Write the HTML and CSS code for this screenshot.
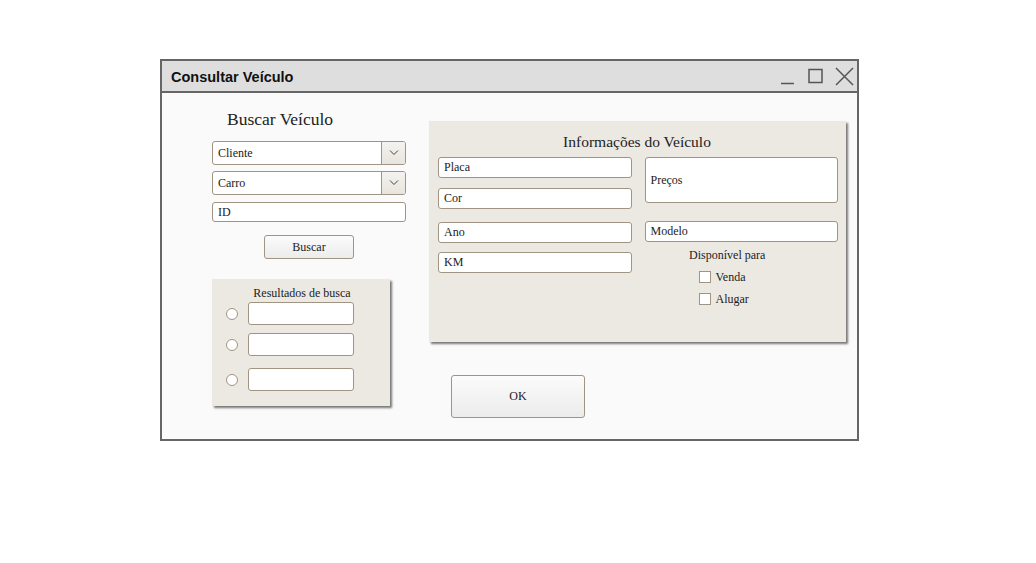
FILE: index.html
```html
<!DOCTYPE html>
<html lang="pt">
<head>
<meta charset="utf-8">
<title>Consultar Veículo</title>
<link rel="stylesheet" href="styles.css">
</head>
<body>
<div class="window">
  <div class="titlebar">
    <span class="title">Consultar Veículo</span>
    <div class="controls">
      <svg class="ctl" width="16" height="18" viewBox="0 0 16 18"><line x1="0" y1="16.5" x2="13" y2="16.5" stroke="#555" stroke-width="1.5"/></svg>
      <svg class="ctl" width="16" height="18" viewBox="0 0 16 18"><rect x="1" y="2.5" width="13" height="13" fill="none" stroke="#555" stroke-width="1.5"/></svg>
      <svg class="ctl" width="19" height="19" viewBox="0 0 19 19"><path d="M1 1 L18 18 M18 1 L1 18" stroke="#555" stroke-width="1.5" fill="none"/></svg>
    </div>
  </div>
  <div class="content">
    <div class="leftcol">
      <div class="heading">Buscar Veículo</div>
      <div class="select s1"><span class="val">Cliente</span><span class="dd"><svg width="10" height="6" viewBox="0 0 10 6"><path d="M1 0.5 L5 4.5 L9 0.5" fill="none" stroke="#444" stroke-width="1"/></svg></span></div>
      <div class="select s2"><span class="val">Carro</span><span class="dd"><svg width="10" height="6" viewBox="0 0 10 6"><path d="M1 0.5 L5 4.5 L9 0.5" fill="none" stroke="#444" stroke-width="1"/></svg></span></div>
      <div class="input idbox">ID</div>
      <div class="btn buscar">Buscar</div>
      <div class="panel results">
        <div class="ptitle">Resultados de busca</div>
        <div class="rrow r1"><span class="radio"></span><span class="input rinput"></span></div>
        <div class="rrow r2"><span class="radio"></span><span class="input rinput"></span></div>
        <div class="rrow r3"><span class="radio"></span><span class="input rinput"></span></div>
      </div>
    </div>
    <div class="rightcol">
      <div class="panel info">
        <div class="ititle">Informações do Veículo</div>
        <div class="icols">
          <div class="icol">
            <div class="input f placa">Placa</div>
            <div class="input f cor">Cor</div>
            <div class="input f ano">Ano</div>
            <div class="input f km">KM</div>
          </div>
          <div class="icol">
            <div class="input precos">Preços</div>
            <div class="input f modelo">Modelo</div>
            <div class="disp">Disponível para</div>
            <div class="chk c1"><span class="box"></span>Venda</div>
            <div class="chk c2"><span class="box"></span>Alugar</div>
          </div>
        </div>
      </div>
      <div class="btn ok">OK</div>
    </div>
  </div>
</div>
</body>
</html>
```
FILE: styles.css
```css
* { box-sizing: border-box; }
body { margin: 0; background: #fff; font-family: "Liberation Serif", "Times New Roman", serif; color: #222; }
.window {
  margin: 59px 0 0 160px;
  width: 699px;
  height: 382px;
  border: 2px solid #666;
  background: #fafafa;
}
.titlebar {
  height: 32px;
  background: #dedede;
  border-bottom: 2px solid #666;
  display: flex;
  align-items: center;
  justify-content: space-between;
  padding: 0 3px 0 9px;
}
.title {
  font-family: "Liberation Sans", Arial, sans-serif;
  font-weight: bold;
  font-size: 14.5px;
  color: #111;
  margin-top: 1px;
}
.controls { display: flex; align-items: center; gap: 11px; height: 100%; }
.ctl { display: block; }
.content { display: flex; padding-left: 50px; }
.leftcol { width: 194px; display: flex; flex-direction: column; }
.heading {
  margin-top: 16px;
  height: 20px;
  line-height: 20px;
  font-size: 17.5px;
  padding-left: 15px;
  color: #222;
}
.input {
  background: #fff;
  border: 1px solid #a09585;
  border-radius: 3px;
  font-size: 12px;
  padding-left: 5px;
  display: flex;
  align-items: center;
  color: #222;
}
.select {
  height: 24px;
  background: #fff;
  border: 1px solid #a09585;
  border-radius: 3px;
  display: flex;
  font-size: 12px;
}
.select .val { flex: 1; display: flex; align-items: center; padding-left: 5px; }
.select .dd {
  width: 24px;
  border-left: 1px solid #a09585;
  background: linear-gradient(#f4f2ee, #e8e5df);
  display: flex; align-items: center; justify-content: center;
  border-radius: 0 2px 2px 0;
}
.s1 { margin-top: 12px; }
.s2 { margin-top: 6px; }
.idbox { margin-top: 7px; height: 20px; }
.btn {
  border: 1px solid #a09585;
  border-radius: 3px;
  background: linear-gradient(#fbfbfb, #ececec);
  display: flex; align-items: center; justify-content: center;
  font-size: 12px;
  color: #222;
}
.buscar { margin: 13px 0 0 52px; width: 90px; height: 24px; }
.panel {
  background: #ece9e3;
  box-shadow: 2px 2px 2px #777;
}
.results {
  margin-top: 20px;
  width: 178px;
  height: 127px;
  padding-top: 7px;
}
.ptitle { text-align: center; font-size: 12px; height: 14px; line-height: 14px; padding-left: 2px; }
.rrow { display: flex; align-items: center; padding-left: 14px; }
.r1 { margin-top: 2px; }
.r2 { margin-top: 8px; }
.r3 { margin-top: 12px; }
.radio {
  width: 12px; height: 12px;
  border: 1px solid #a09585;
  border-radius: 50%;
  background: #fff;
}
.rinput { margin-left: 10px; width: 106px; height: 23px; }
.rightcol { margin-left: 23px; display: flex; flex-direction: column; }
.info {
  margin-top: 28px;
  width: 417px;
  height: 221px;
  padding: 11px 8px 0 9px;
}
.ititle { text-align: center; font-size: 15.5px; height: 20px; line-height: 20px; padding-right: 2px; }
.icols { display: flex; gap: 13px; margin-top: 5px; }
.icol { width: 194px; display: flex; flex-direction: column; }
.f { height: 21px; }
.cor { margin-top: 10px; }
.ano { margin-top: 13px; }
.km { margin-top: 9px; }
.precos { height: 46px; }
.modelo { margin-top: 18px; }
.disp { font-size: 12px; text-align: center; margin-top: 6px; padding-right: 28px; line-height: 15px; }
.chk { display: flex; align-items: center; font-size: 12px; padding-left: 54px; height: 14px; }
.c1 { margin-top: 7px; }
.c2 { margin-top: 8px; }
.box {
  width: 12px; height: 12px;
  border: 1px solid #a09585;
  background: #fff;
  margin-right: 5px;
}
.ok { margin: 33px 0 0 22px; width: 134px; height: 43px; }
```
